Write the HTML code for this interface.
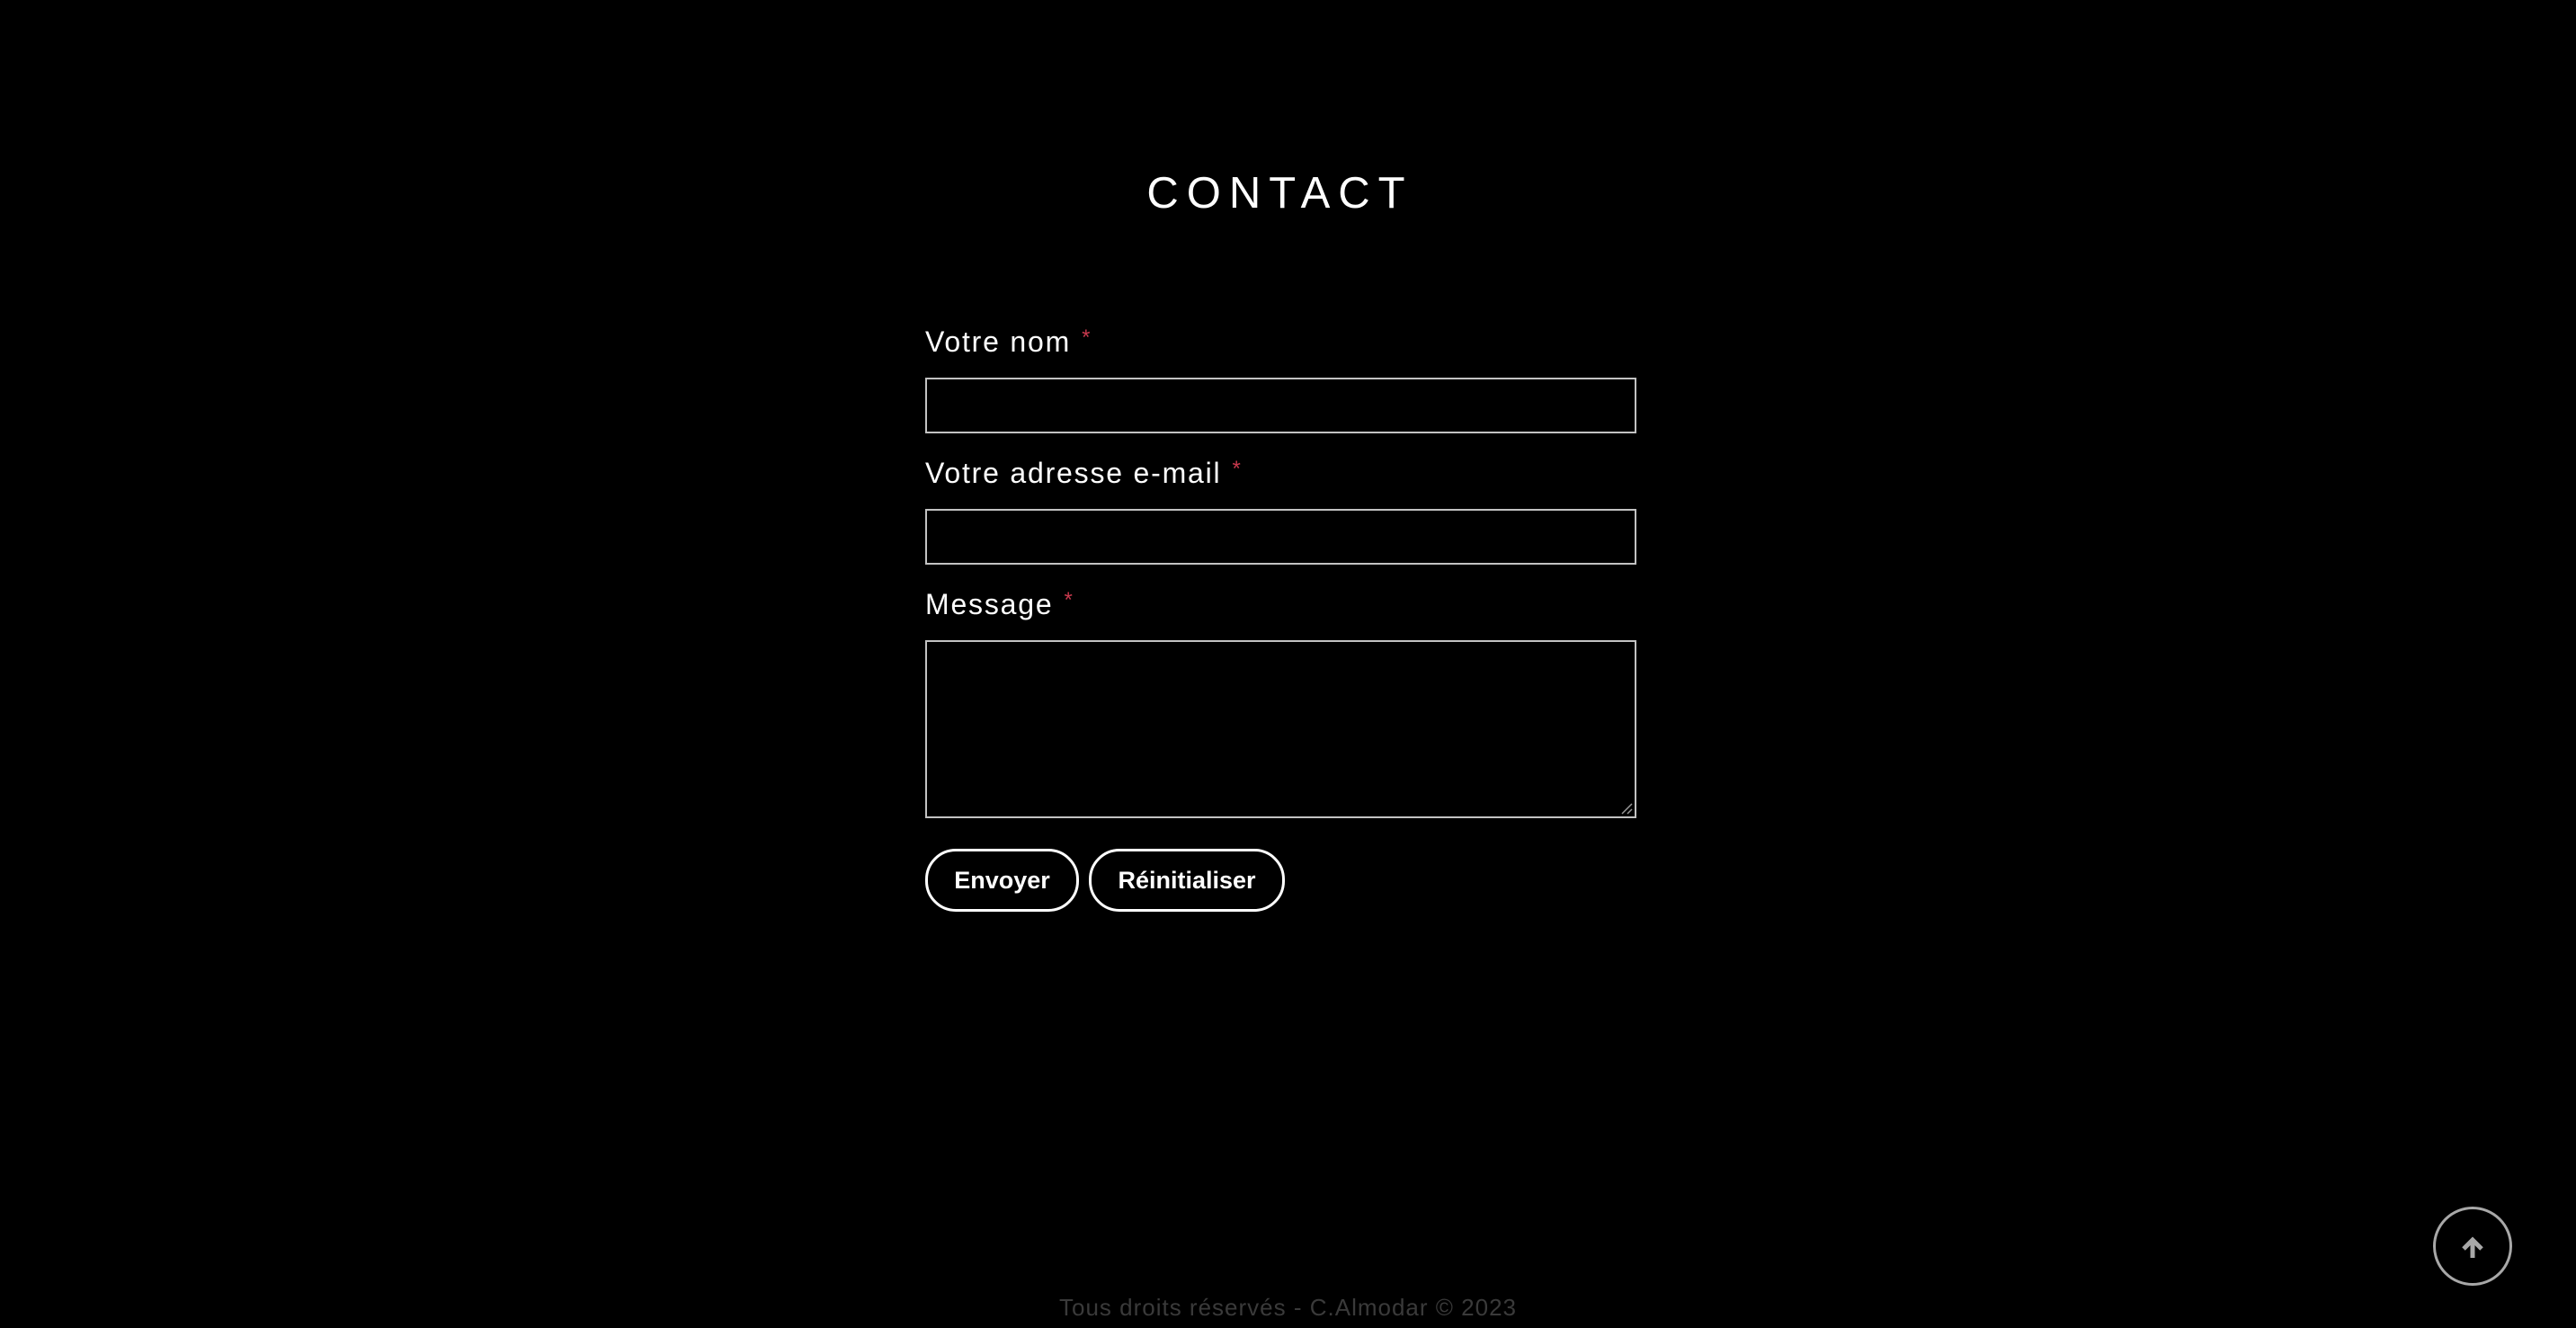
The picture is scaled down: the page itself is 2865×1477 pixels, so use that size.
<!DOCTYPE html>
<html><head><meta charset="utf-8"><style>
html,body{margin:0;padding:0;background:#000;width:2865px;height:1477px;overflow:hidden;font-family:"Liberation Sans",sans-serif;color:#fff}
.h{position:absolute;left:0;width:2865px;top:186px;text-align:center;font-size:49px;letter-spacing:9px;line-height:58px;text-indent:-18px}
.lbl{position:absolute;left:1029px;font-size:32px;letter-spacing:1.8px;line-height:32px}
.lbl span{color:#c8394d;font-size:24px;vertical-align:top;position:relative;top:-4px;margin-left:12px;letter-spacing:0}
.box{position:absolute;left:1029px;width:787px;border:2px solid #c2c2c2;background:#000}
.btn{position:absolute;top:944px;height:64px;border:3px solid #fff;border-radius:34px;font-weight:bold;font-size:27px;line-height:64px;text-align:center}
.foot{position:absolute;left:0;width:2865px;top:1439px;text-align:center;font-size:26px;letter-spacing:1px;color:#3a3a3a}
.up{position:absolute;left:2706px;top:1342px;width:82px;height:82px;border:3px solid #a8a8a8;border-radius:50%}
</style></head><body>
<div class="h">CONTACT</div>
<div class="lbl" style="top:364px">Votre nom<span>*</span></div>
<div class="box" style="top:420px;height:58px"></div>
<div class="lbl" style="top:510px">Votre adresse e-mail<span>*</span></div>
<div class="box" style="top:566px;height:58px"></div>
<div class="lbl" style="top:656px">Message<span>*</span></div>
<div class="box" style="top:712px;height:194px">
<svg width="16" height="16" style="position:absolute;right:2px;bottom:2px" viewBox="0 0 16 16"><path d="M4 15L15 4M10 15L15 10" stroke="#999" stroke-width="1.5"/></svg>
</div>
<div class="btn" style="left:1029px;width:165px">Envoyer</div>
<div class="btn" style="left:1211px;width:212px">Réinitialiser</div>
<div class="up"><svg width="82" height="82" viewBox="0 0 82 82"><path d="M41 54V36M31 44L41 34L51 44" stroke="#a8a8a8" stroke-width="5" fill="none"/></svg></div>
<div class="foot">Tous droits réservés - C.Almodar © 2023</div>
</body></html>
